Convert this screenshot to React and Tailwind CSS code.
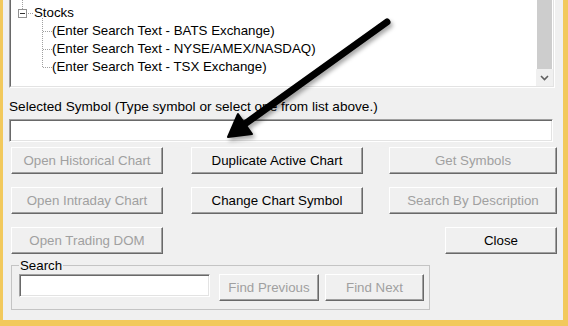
import React from "react";

const raised =
  "h-[27px] bg-[#f0f0f0] border border-t-white border-l-white border-r-[#696969] border-b-[#696969] shadow-[inset_-1px_-1px_0_#a0a0a0] flex items-center justify-center leading-none";
const sunken =
  "bg-white border border-t-[#a0a0a0] border-l-[#a0a0a0] border-r-white border-b-white shadow-[inset_1px_1px_0_#696969,inset_-1px_-1px_0_#e3e3e3]";

function Btn({ w, disabled, small, children, className = "" }) {
  return (
    <button
      type="button"
      className={`${raised} ${small ? "h-[23px]" : ""} ${disabled ? "text-[#a0a0a0]" : "text-black"} ${w} ${className}`}
    >
      {children}
    </button>
  );
}

// dotted connector lines + the collapse box of the tree
function TreeLines() {
  return (
    <svg className="absolute left-0 top-0" width="60" height="80" shapeRendering="crispEdges">
      <g stroke="#a0a0a0" strokeWidth="1" strokeDasharray="1 1">
        <line x1="11.5" y1="0" x2="11.5" y2="9" />
        <line x1="17" y1="13.5" x2="23" y2="13.5" />
        <line x1="31.5" y1="18" x2="31.5" y2="68" />
        <line x1="32" y1="31.5" x2="41" y2="31.5" />
        <line x1="32" y1="49.5" x2="41" y2="49.5" />
        <line x1="32" y1="67.5" x2="41" y2="67.5" />
      </g>
      <rect x="7.5" y="9.5" width="8" height="8" fill="white" stroke="#919191" />
      <line x1="9" y1="13.5" x2="14" y2="13.5" stroke="#333" />
    </svg>
  );
}

export default function App() {
  const items = [
    "(Enter Search Text - BATS Exchange)",
    "(Enter Search Text - NYSE/AMEX/NASDAQ)",
    "(Enter Search Text - TSX Exchange)",
  ];

  return (
    <div className="relative w-[568px] h-[326px] bg-[#f2c95c] pl-[3px] pr-[5px] pb-[6px] font-['Liberation_Sans',Arial,sans-serif] text-[13.3px] text-black">
      <div className="h-full bg-[#f0f0f0] flex flex-col">
        {/* symbol tree */}
        <div className="ml-[6px] w-[546px] h-[88px] flex border-l border-b border-r border-l-[#a0a0a0] border-b-white border-r-white">
          <div className="flex-1 flex border-l border-b border-r border-l-[#696969] border-b-[#e3e3e3] border-r-[#e3e3e3] bg-white">
            <div className="relative flex-1 pt-[4px] leading-[18px]">
              <TreeLines />
              <div className="pl-[23px]">Stocks</div>
              {items.map((t) => (
                <div key={t} className="pl-[41px]">
                  {t}
                </div>
              ))}
            </div>
            <div className="w-[17px] flex flex-col">
              <div className="h-[69px] mx-[1px] bg-[#cdcdcd]" />
              <div className="flex-1 bg-[#f0f0f0] flex items-center justify-center">
                <svg width="9" height="6" viewBox="0 0 9 6">
                  <path d="M1 1 L4.5 4.5 L8 1" fill="none" stroke="#606060" strokeWidth="1.6" />
                </svg>
              </div>
            </div>
          </div>
        </div>

        <div className="ml-[6px] mt-[11px] leading-[15px] text-[13.6px]">
          Selected Symbol (Type symbol or select one from list above.)
        </div>
        <div className={`${sunken} ml-[6px] mt-[5px] w-[544px] h-[23px]`} />

        {/* action buttons */}
        <div className="ml-[8px] mt-[5px] flex flex-col gap-[13px]">
          <div className="flex">
            <Btn w="w-[152px]" disabled>Open Historical Chart</Btn>
            <Btn w="w-[172px]" className="ml-[28px]">Duplicate Active Chart</Btn>
            <Btn w="w-[168px]" className="ml-[26px]" disabled>Get Symbols</Btn>
          </div>
          <div className="flex">
            <Btn w="w-[152px]" disabled>Open Intraday Chart</Btn>
            <Btn w="w-[172px]" className="ml-[28px]">Change Chart Symbol</Btn>
            <Btn w="w-[168px]" className="ml-[26px]" disabled>Search By Description</Btn>
          </div>
          <div className="flex">
            <Btn w="w-[152px]" disabled>Open Trading DOM</Btn>
            <Btn w="w-[112px]" className="ml-[282px]">Close</Btn>
          </div>
        </div>

        {/* search group */}
        <fieldset className="ml-[8px] mt-[4px] w-[419px] border border-[#c4c4c4] pl-[7px] pb-[8px] pt-[1px]">
          <legend className="px-[1px] leading-[15px]">Search</legend>
          <div className="flex">
            <div className={`${sunken} w-[191px] h-[23px]`} />
            <Btn w="w-[100px]" small disabled className="ml-[9px]">Find Previous</Btn>
            <Btn w="w-[99px]" small disabled className="ml-[6px]">Find Next</Btn>
          </div>
        </fieldset>
      </div>

      {/* annotation arrow */}
      <svg
        className="absolute left-0 top-0 pointer-events-none drop-shadow-[2px_3px_2px_rgba(0,0,0,0.35)]"
        width="568"
        height="326"
      >
        <line x1="387" y1="22" x2="242" y2="126" stroke="black" strokeWidth="7" strokeLinecap="round" />
        <polygon points="228,137 252,134 238,114" fill="black" stroke="black" strokeWidth="2" strokeLinejoin="round" />
      </svg>
    </div>
  );
}
